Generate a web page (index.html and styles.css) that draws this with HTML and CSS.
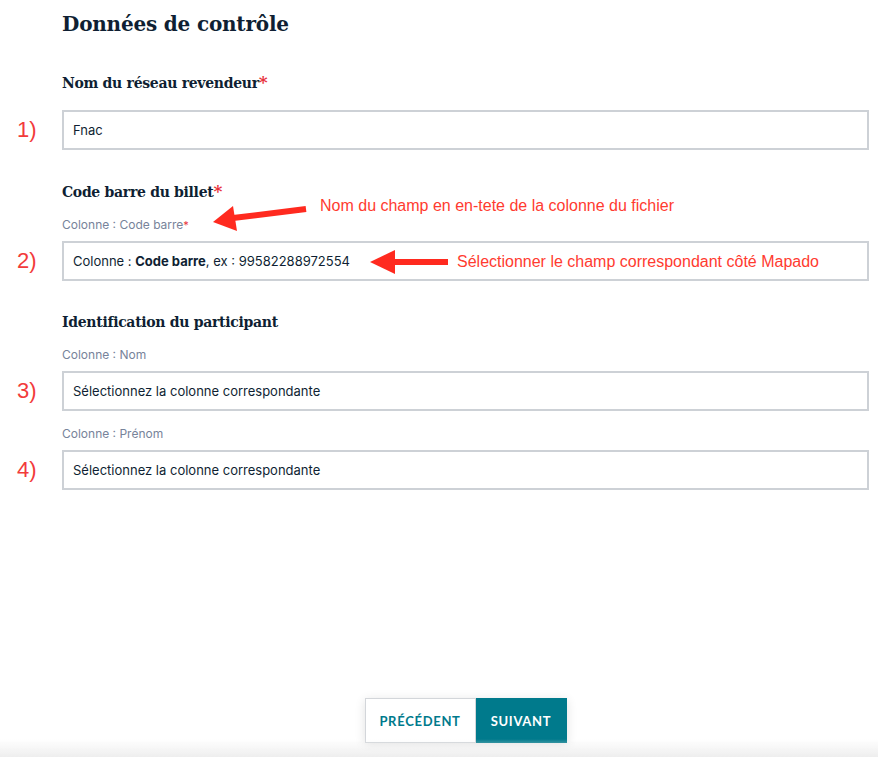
FILE: index.html
```html
<!DOCTYPE html>
<html>
<head>
    <meta charset="utf-8">
    <title>Données de contrôle</title>
    <link rel="stylesheet" href="styles.css">
</head>
<body>
    <div class="page">
        <form class="form">
            <h1>Données de contrôle</h1>

            <div class="section">
                <h2>Nom du réseau revendeur<span class="req">*</span></h2>
                <div class="field">
                    <span class="step">1)</span>
                    <div class="input"><span>Fnac</span></div>
                </div>
            </div>

            <div class="section">
                <h2>Code barre du billet<span class="req">*</span></h2>
                <div class="hint">Colonne : Code barre<span class="req">*</span></div>
                <div class="field">
                    <span class="step">2)</span>
                    <div class="input"><span>Colonne : <b>Code barre</b>, ex : 99582288972554</span></div>
                </div>

                <!-- notes posées sur le formulaire -->
                <svg class="arrow arrow-hint" width="97" height="29" viewBox="0 0 97 29">
                    <path d="M95 5 L22 14" stroke="#ff2a1f" stroke-width="6" fill="none"/>
                    <path d="M2 18 L22 2 L26 27 Z" fill="#ff2a1f"/>
                </svg>
                <span class="note note-hint">Nom du champ en en-tete de la colonne du fichier</span>

                <svg class="arrow arrow-field" width="82" height="26" viewBox="0 0 82 26">
                    <path d="M80 13 L24 13" stroke="#ff2a1f" stroke-width="6" fill="none"/>
                    <path d="M2 13 L27 1 L27 25 Z" fill="#ff2a1f"/>
                </svg>
                <span class="note note-field">Sélectionner le champ correspondant côté Mapado</span>
            </div>

            <div class="section">
                <h2>Identification du participant</h2>
                <div class="hint">Colonne : Nom</div>
                <div class="field">
                    <span class="step">3)</span>
                    <div class="input"><span>Sélectionnez la colonne correspondante</span></div>
                </div>
                <div class="hint">Colonne : Prénom</div>
                <div class="field">
                    <span class="step">4)</span>
                    <div class="input"><span>Sélectionnez la colonne correspondante</span></div>
                </div>
            </div>
        </form>

        <div class="actions">
            <div class="btn-group">
                <button type="button" class="btn btn-prev">Précédent</button>
                <button type="button" class="btn btn-next">Suivant</button>
            </div>
        </div>
    </div>
    <div class="footer-fade"></div>
</body>
</html>
```

FILE: styles.css
```css
* {
    margin: 0;
    padding: 0;
    box-sizing: border-box;
}

body {
    font-family: Inter, "Noto Sans", sans-serif;
    color: #0f1f33;
    background: #fff;
    overflow: hidden;
}

.page {
    min-height: 100vh;
    display: flex;
    flex-direction: column;
    padding: 0 9px 14px 62px;
}

.form {
    flex: 1;
}

h1 {
    font-family: "DejaVu Serif", serif;
    font-size: 20px;
    font-weight: bold;
    color: #0f1f33;
    padding-top: 10px;
    line-height: 28px;
    letter-spacing: -0.2px;
}

h2 {
    font-family: "DejaVu Serif", serif;
    font-size: 14px;
    font-weight: bold;
    line-height: 20px;
    letter-spacing: -0.3px;
    margin-bottom: 17px;
}

.section {
    position: relative;
    margin-top: 34px;
}

.section + .section {
    margin-top: 31px;
}

.req {
    color: #e8323c;
    font-size: 17px;
}

.hint .req {
    font-size: 11px;
}

.hint {
    font-size: 12px;
    color: #77839a;
    line-height: 16px;
    margin: -2px 0 8px;
}

.field {
    position: relative;
}

.field + .hint {
    margin-top: 15px;
}

.step {
    position: absolute;
    left: -45px;
    top: 7px;
    font-family: "Liberation Sans", Arial, sans-serif;
    font-size: 22px;
    color: #f23b3b;
}

.input {
    height: 40px;
    border: 2px solid #cdd1d6;
    padding: 0 9px;
    display: flex;
    align-items: center;
    font-size: 13px;
    color: #0f1f33;
}

.input b {
    font-weight: 700;
}

.arrow {
    position: absolute;
}

.arrow-hint {
    left: 149px;
    top: 23px;
}

.arrow-field {
    left: 306px;
    top: 68px;
}

.note {
    position: absolute;
    font-family: "Liberation Sans", Arial, sans-serif;
    font-size: 16px;
    line-height: 18px;
    color: #ff3b30;
    white-space: nowrap;
}

.note-hint {
    left: 258px;
    top: 16px;
}

.note-field {
    left: 395px;
    top: 72px;
}

.actions {
    display: flex;
    justify-content: center;
}

.btn-group {
    display: flex;
    box-shadow: 0 2px 10px rgba(0, 0, 0, 0.12);
}

.btn {
    height: 45px;
    border: none;
    font-family: Lato, sans-serif;
    font-size: 13px;
    font-weight: bold;
    text-transform: uppercase;
    letter-spacing: 0.7px;
    cursor: pointer;
}

.btn-prev {
    width: 111px;
    background: #fff;
    color: #007a8c;
    border: 1px solid #d3d6da;
}

.btn-next {
    width: 91px;
    background: #007a8c;
    color: #fff;
}

.footer-fade {
    position: fixed;
    left: 0;
    right: 0;
    bottom: 0;
    height: 18px;
    background: linear-gradient(rgba(240, 240, 240, 0), #eeeeee);
    pointer-events: none;
}
```
